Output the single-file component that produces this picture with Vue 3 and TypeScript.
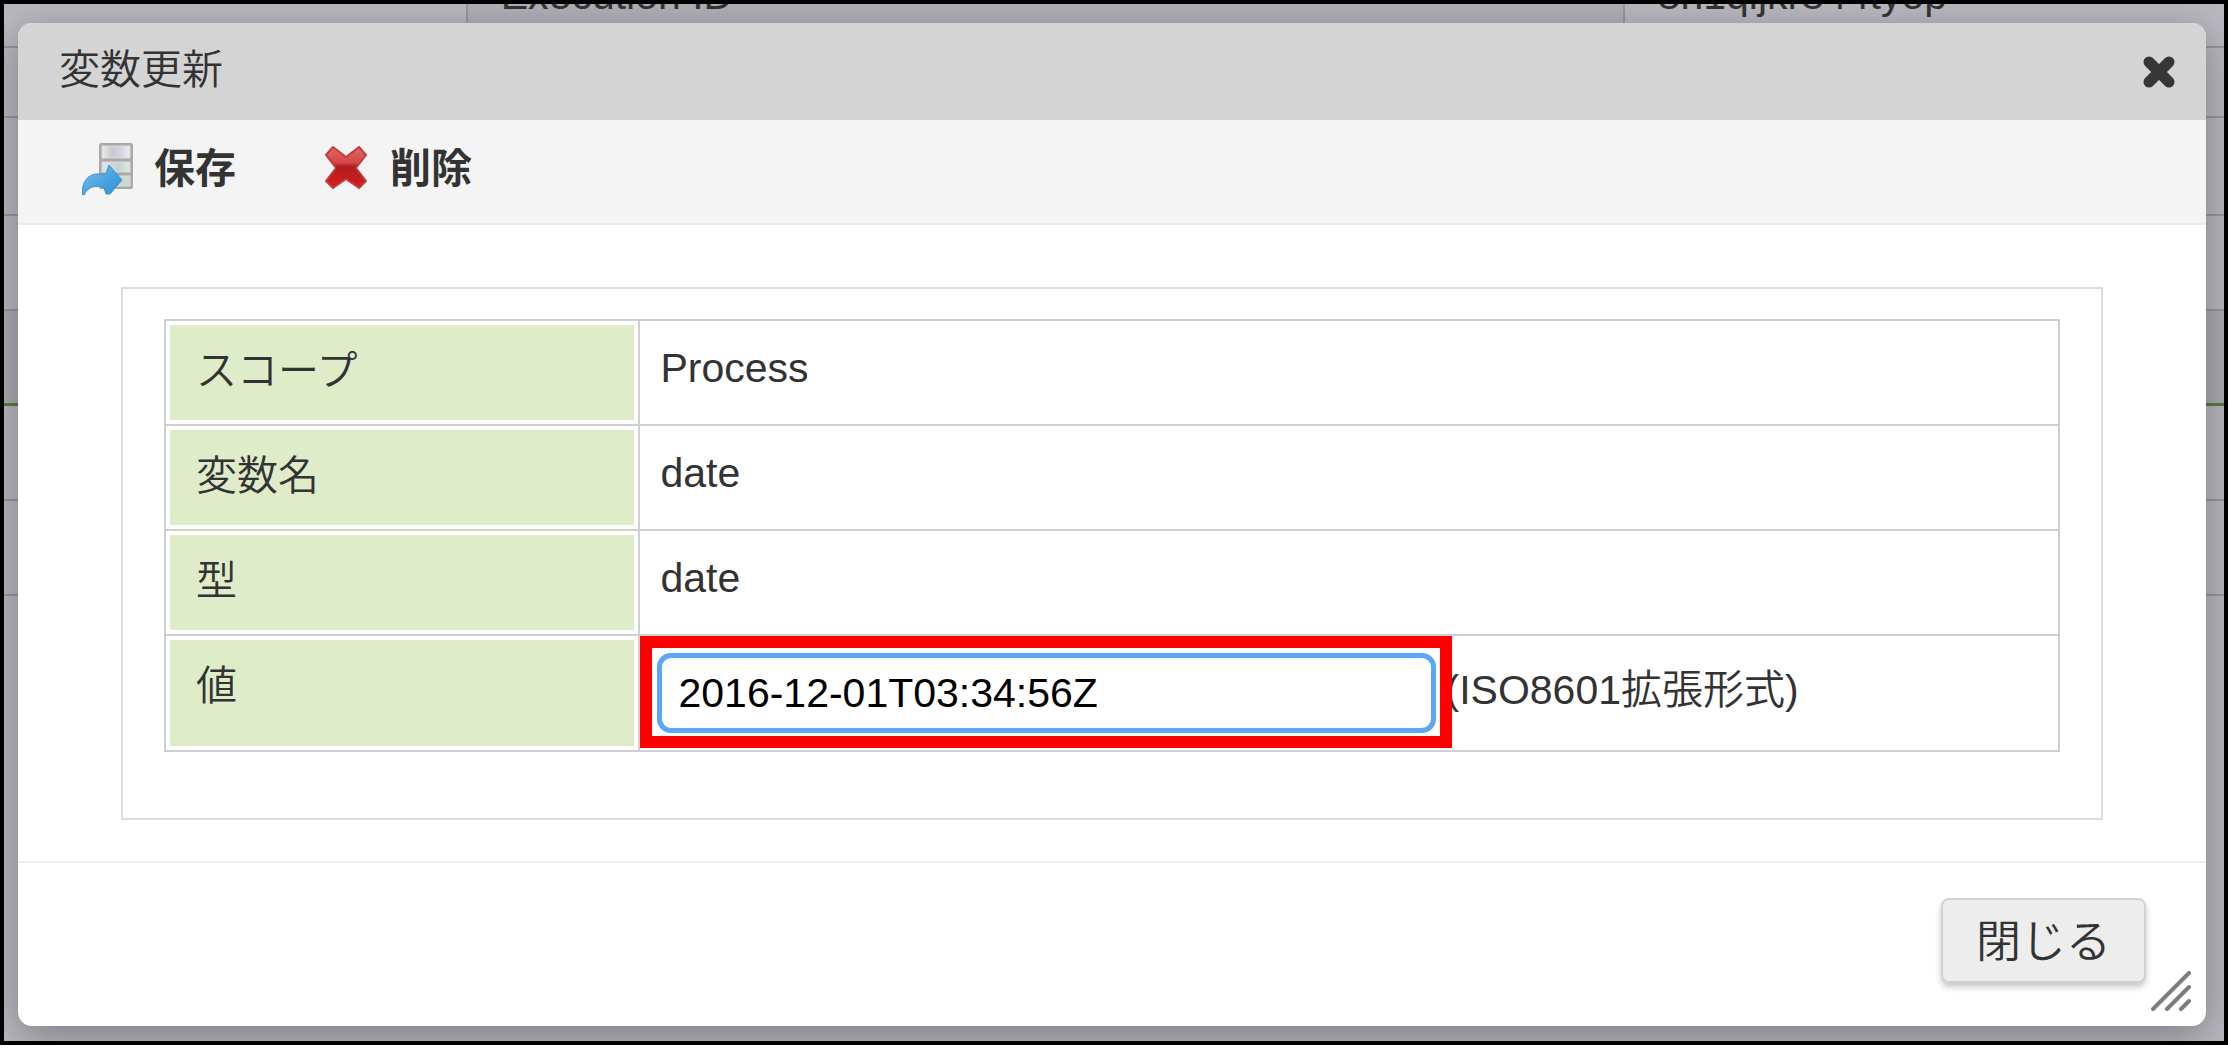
<script setup lang="ts">
import { ref } from 'vue'

interface VariableRow {
  label: string
  value: string
}

const rows: VariableRow[] = [
  { label: 'スコープ', value: 'Process' },
  { label: '変数名', value: 'date' },
  { label: '型', value: 'date' },
]

const variableValue = ref('2016-12-01T03:34:56Z')
</script>

<template>
  <div class="screen">
    <div class="backdrop" aria-hidden="true">
      <div class="line first">
        <span class="cell c1"></span>
        <span class="cell c2">Execution ID</span>
        <span class="cell c3">8n1qijkr844tyop</span>
      </div>
      <div class="line short"></div>
      <div class="line tall"></div>
      <div class="line"></div>
      <div class="line heading"></div>
      <div class="line"></div>
      <div class="line"></div>
    </div>

    <section class="dialog" role="dialog" aria-labelledby="dialog-title">
      <header class="titlebar">
        <h1 id="dialog-title">変数更新</h1>
        <button class="icon-close" type="button" aria-label="Close">
          <svg viewBox="0 0 34 34" width="34" height="34">
            <path d="M7 7 L27 27 M27 7 L7 27" fill="none" stroke="#383638" stroke-width="11" stroke-linecap="round" />
          </svg>
        </button>
      </header>

      <nav class="toolbar">
        <button class="tool" type="button">
          <svg viewBox="0 0 52 52" width="52" height="52">
            <defs>
              <linearGradient id="drawer" x1="0" x2="1" y1="0" y2="0">
                <stop offset="0" stop-color="#ececec" />
                <stop offset="0.35" stop-color="#c9cacd" />
                <stop offset="0.75" stop-color="#d9d8e6" />
                <stop offset="1" stop-color="#eeeeee" />
              </linearGradient>
              <linearGradient id="drawer-low" x1="0" x2="1" y1="0" y2="0">
                <stop offset="0" stop-color="#dfe5e8" />
                <stop offset="0.6" stop-color="#c3d2d6" />
                <stop offset="1" stop-color="#dcebdc" />
              </linearGradient>
              <linearGradient id="arrow" x1="0" x2="1" y1="0" y2="1">
                <stop offset="0" stop-color="#8cc4ea" />
                <stop offset="0.5" stop-color="#4aa7e2" />
                <stop offset="1" stop-color="#2f8fd6" />
              </linearGradient>
            </defs>
            <rect x="17" y="0" width="34" height="46" rx="2" fill="#a9a9a9" />
            <rect x="20" y="3" width="28" height="12" fill="url(#drawer)" stroke="#dcdcdc" />
            <rect x="20" y="19" width="28" height="10" fill="url(#drawer-low)" stroke="#dcdcdc" />
            <rect x="20" y="33" width="28" height="10" fill="#c9dbc8" stroke="#dcdcdc" />
            <path d="M0 52 C0 38 6 32 14 31 L24 31 L27 22 L40 37 L28 51 L24 51 L22 45 C14 42 6 43 2 52 Z" fill="url(#arrow)" stroke="#3c8fcd" stroke-width="1" />
          </svg>
          <span>保存</span>
        </button>
        <button class="tool" type="button">
          <svg viewBox="0 0 52 52" width="52" height="52">
            <defs>
              <linearGradient id="cross" x1="0" x2="0" y1="0" y2="1">
                <stop offset="0" stop-color="#e06a6a" />
                <stop offset="0.38" stop-color="#d24646" />
                <stop offset="0.48" stop-color="#ae1c1c" />
                <stop offset="1" stop-color="#d91e1e" />
              </linearGradient>
            </defs>
            <path
              d="M15 4 L28 14 L41 4 L48 12 L38 25 L48 38 L41 45 L28 36 L15 45 L8 38 L18 25 L8 12 Z"
              fill="url(#cross)"
              stroke="#c23c3c"
              stroke-width="2"
              stroke-linejoin="round"
            />
          </svg>
          <span>削除</span>
        </button>
      </nav>

      <main class="body">
        <div class="panel">
          <table class="variables">
            <tbody>
              <tr v-for="row in rows" :key="row.label">
                <th scope="row">{{ row.label }}</th>
                <td>{{ row.value }}</td>
              </tr>
              <tr>
                <th scope="row"><label for="variable-value">値</label></th>
                <td class="editable">
                  <div class="field">
                    <div class="marked">
                      <input id="variable-value" v-model="variableValue" type="text" />
                    </div>
                    <span class="note">(ISO8601拡張形式)</span>
                  </div>
                </td>
              </tr>
            </tbody>
          </table>
        </div>
      </main>

      <footer class="footer">
        <button class="close" type="button">閉じる</button>
        <svg class="grip" viewBox="0 0 40 40" width="40" height="40" aria-hidden="true">
          <path d="M2 38 L38 2 M16 38 L38 16 M30 38 L38 30" fill="none" stroke="#7c7c7c" stroke-width="4" stroke-linecap="round" />
        </svg>
      </footer>
    </section>
  </div>
</template>

<style>
body {
  margin: 0;
  background: #fff;
}
</style>

<style scoped>
.screen,
.screen * {
  box-sizing: border-box;
}

.screen {
  position: relative;
  overflow: hidden;
  padding: 19px 18px 15px 14px;
  border: 4px solid #000;
  background: #bab9bf;
  color: #333;
  font-family: 'Liberation Sans', 'Noto Sans CJK JP', sans-serif;
  font-size: 41px;
  font-weight: 350;
  line-height: 60px;
}

/* page dimmed behind the dialog */
.backdrop {
  position: absolute;
  inset: 0;
}

.line {
  height: 95px;
  border-bottom: 2px solid #98979c;
}

.line.first {
  display: flex;
  height: 44px;
  overflow: hidden;
}

.line.short {
  height: 70px;
}

.line.tall {
  height: 98px;
}

.line.heading {
  background: #adacb1;
  border-bottom: 3px solid #5a7a38;
}

.cell {
  display: flex;
  align-items: flex-end;
  padding: 0 0 28px 33px;
  line-height: 46px;
  white-space: nowrap;
}

.c1 {
  width: 20.8%;
}

.c2 {
  width: 52.2%;
  border: solid #98979c;
  border-width: 0 2px;
  background: #b1b0b6;
}

.dialog {
  position: relative;
  border-radius: 14px;
  background: #fff;
  box-shadow: 0 10px 40px rgba(40, 38, 50, 0.42);
}

.titlebar {
  display: flex;
  align-items: center;
  justify-content: space-between;
  height: 97px;
  padding: 0 30px 0 41px;
  border-radius: 14px 14px 0 0;
  background: #d4d4d4;
}

h1 {
  margin: 0;
  padding-bottom: 4px;
  font-size: 41px;
  font-weight: 350;
}

button {
  font-family: inherit;
  color: #333;
  cursor: pointer;
}

.icon-close {
  display: flex;
  padding: 0;
  border: 0;
  background: none;
}

.toolbar {
  display: flex;
  align-items: center;
  gap: 82px;
  height: 105px;
  padding: 0 64px 6px;
  border-bottom: 2px solid #ececec;
  background: #f4f4f4;
}

.tool {
  display: flex;
  align-items: center;
  gap: 20px;
  padding: 0;
  border: 0;
  background: none;
  font-size: 41px;
  font-weight: 700;
  line-height: 60px;
}

.body {
  padding: 62px 103px 41px;
}

.panel {
  padding: 30px 41px 66px;
  border: 2px solid #ddd;
}

.variables {
  width: 100%;
  border-collapse: collapse;
}

th,
td {
  border: 2px solid #d0d0d0;
  text-align: left;
  vertical-align: top;
  font-weight: 350;
}

th {
  width: 25%;
  padding: 20px 30px 23px;
  background: #deecca;
  box-shadow: inset 0 0 0 4px #fff;
}

td {
  padding: 17px 21px;
}

td.editable {
  padding: 17px;
}

.field {
  display: flex;
  gap: 10px;
}

.marked {
  position: relative;
  flex: 0 1 779px;
}

.marked::after {
  content: '';
  position: absolute;
  inset: -17px -16px -15px -17px;
  border: 12px solid #f00;
  pointer-events: none;
}

input {
  display: block;
  width: 100%;
  height: 80px;
  padding: 0 17px;
  border: 5px solid #5ba6f5;
  border-radius: 14px;
  outline: 0;
  background: #fff;
  color: #000;
  font: inherit;
}

.note {
  line-height: 74px;
  white-space: nowrap;
}

.footer {
  position: relative;
  display: flex;
  justify-content: flex-end;
  padding: 35px 60px 43px;
  border-top: 2px solid #eee;
}

.close {
  height: 85px;
  padding: 0 33px 5px;
  border: 2px solid #d2d2d2;
  border-radius: 8px;
  background: #ededed;
  box-shadow: 0 4px 6px rgba(0, 0, 0, 0.22);
  font-size: 45px;
  font-weight: 350;
}

.grip {
  position: absolute;
  right: 15px;
  bottom: 15px;
}
</style>
